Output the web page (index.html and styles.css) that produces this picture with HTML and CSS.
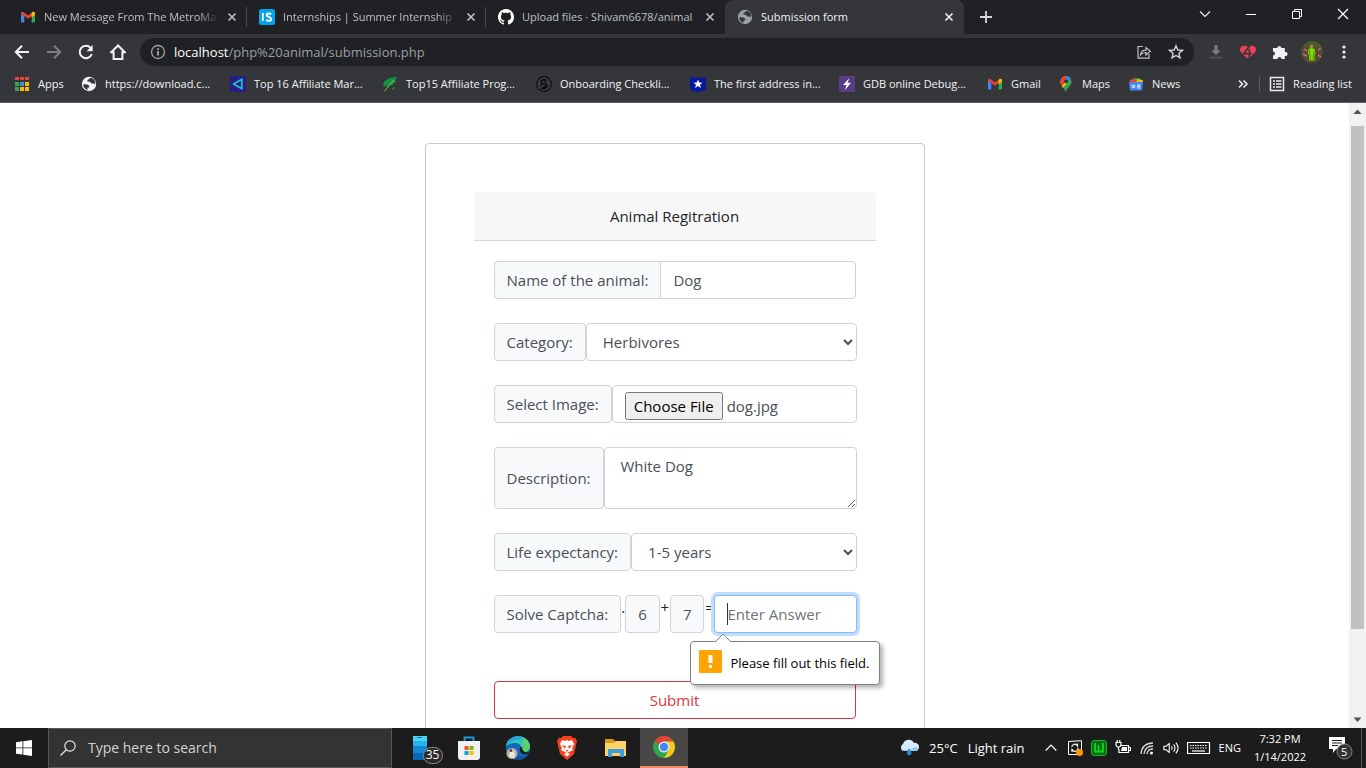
FILE: index.html
```html
<!DOCTYPE html>
<html lang="en">
<head>
<meta charset="utf-8">
<title>Submission form</title>
<link rel="stylesheet" href="styles.css">
</head>
<body>
<svg class="defs" aria-hidden="true">
  <symbol id="x" viewBox="0 0 10 10"><path d="M1.5 1.5l7 7M8.500 1.500l-7 7" fill="none" stroke="currentColor" stroke-width="1.6"/></symbol>
  <symbol id="gmail" viewBox="0 0 14 12"><path d="M0 2v8.500a1 1 0 0 0 1 1h2.300V5z" fill="#4285f4"/><path d="M14 2v8.500a1 1 0 0 1-1 1h-2.300V5z" fill="#34a853"/><path d="M10.700 1.700L14 1v2.400l-3.300 2.600z" fill="#fbbc04"/><path d="M0 2.200Q0 .3 2 .7l5 3.700L12 .7q2-.2 2 1.500l-3.300 2.700L7 7.800 3.300 5 0 2.800z" fill="#ea4335"/><path d="M12 .7q2-.4 2 1.500v1.200l-3.300 2.500V1.700z" fill="#fbbc04"/></symbol>
  <symbol id="globe" viewBox="0 0 16 16"><circle cx="8" cy="8" r="7.200" fill="currentColor"/><path d="M2.200 8.200l4.300.2 1.700 1.300-.1 1.700-1.600.3v2.200C4 13 2 11 2.200 8.200zM8.700 2.300L7.300 3.700l-1 .3.300 1.500 2.200.2 1.700 1.900 2.700-.1.600 1.600c1.500-3-.6-6.200-3.400-7z" fill="#35363a"/></symbol>
</svg>

<header class="browser">
  <div class="tabs">
    <div class="tab">
      <svg class="fav" viewBox="-1 -2 16 16"><use href="#gmail" width="14" height="12"/></svg>
      <span class="tab-title fade">New Message From The MetroMail</span>
      <button class="close" aria-label="Close tab"><svg><use href="#x"/></svg></button>
    </div>
    <div class="tab">
      <svg class="fav" viewBox="0 0 16 16"><rect width="16" height="16" rx="2.500" fill="#00a5ec"/><path d="M3.800 4v8M12.200 5.300C11 4.100 7.600 4 7.600 6c0 2.400 4.600 1.400 4.600 3.900 0 2.500-4 2.100-5 .9" fill="none" stroke="#fff" stroke-width="1.900"/></svg>
      <span class="tab-title fade">Internships | Summer Internship 2022</span>
      <button class="close" aria-label="Close tab"><svg><use href="#x"/></svg></button>
    </div>
    <div class="tab">
      <svg class="fav" viewBox="0 0 16 16"><path fill="#fff" d="M8 0C3.580 0 0 3.580 0 8c0 3.540 2.290 6.530 5.470 7.590.4.070.55-.17.55-.38 0-.19-.01-.82-.01-1.490-2.010.37-2.530-.49-2.690-.94-.09-.23-.48-.94-.82-1.130-.28-.15-.68-.52-.01-.53.63-.01 1.080.58 1.230.82.72 1.210 1.870.87 2.330.66.070-.52.28-.87.51-1.070-1.780-.2-3.640-.89-3.640-3.950 0-.87.31-1.590.82-2.150-.08-.2-.36-1.020.08-2.120 0 0 .67-.21 2.200.82.64-.18 1.320-.27 2-.27s1.360.09 2 .27c1.530-1.040 2.200-.82 2.200-.82.44 1.100.16 1.920.08 2.120.51.56.82 1.270.82 2.150 0 3.070-1.870 3.750-3.650 3.950.29.25.54.73.54 1.480 0 1.070-.01 1.930-.01 2.200 0 .21.15.46.55.38A8.010 8.010 0 0 0 16 8c0-4.420-3.580-8-8-8z"/></svg>
      <span class="tab-title">Upload files · Shivam6678/animal</span>
      <button class="close" aria-label="Close tab"><svg><use href="#x"/></svg></button>
    </div>
    <div class="tab active">
      <svg class="fav gray" viewBox="0 0 16 16"><use href="#globe" width="16" height="16"/></svg>
      <span class="tab-title">Submission form</span>
      <button class="close" aria-label="Close tab"><svg><use href="#x"/></svg></button>
    </div>
    <button class="newtab" aria-label="New tab"><svg viewBox="0 0 12 12"><path d="M6 0v12M0 6h12" stroke="#d5d7da" stroke-width="1.800"/></svg></button>
    <div class="window-buttons">
      <button aria-label="Search tabs"><svg viewBox="0 0 12 12"><path d="M1 3.500l5 5 5-5" fill="none" stroke="#e8eaed" stroke-width="1.200"/></svg></button>
      <button aria-label="Minimize"><svg viewBox="0 0 12 12"><path d="M1 6.500h10" stroke="#fff"/></svg></button>
      <button aria-label="Restore"><svg viewBox="0 0 12 12"><path d="M1.500 3.500h7v7h-7zM3.500 3V1.500h7v7H9" fill="none" stroke="#fff"/></svg></button>
      <button aria-label="Close"><svg viewBox="0 0 12 12"><path d="M1 1l10 10M11 1L1 11" stroke="#fff" stroke-width="1.200"/></svg></button>
    </div>
  </div>

  <div class="toolbar">
    <button class="tool" aria-label="Back"><svg viewBox="0 0 16 16"><path d="M15 8H2M8 1.800L1.800 8 8 14.200" fill="none" stroke="#f1f3f4" stroke-width="2"/></svg></button>
    <button class="tool" aria-label="Forward"><svg viewBox="0 0 16 16"><path d="M1 8h13M8 1.800L14.200 8 8 14.200" fill="none" stroke="#7d7f82" stroke-width="2"/></svg></button>
    <button class="tool" aria-label="Reload"><svg viewBox="0 0 16 16"><path d="M13.800 10A6.200 6.200 0 1 1 12.500 3.700" fill="none" stroke="#f1f3f4" stroke-width="2"/><path d="M14.700 1v6.200H8.500z" fill="#f1f3f4"/></svg></button>
    <button class="tool" aria-label="Home"><svg viewBox="0 0 16 16"><path d="M8 1.500L1.200 8.300H3.600V15h8.800V8.300h2.400z" fill="none" stroke="#f1f3f4" stroke-width="2"/></svg></button>
    <div class="omnibox">
      <svg class="info" viewBox="0 0 16 16"><circle cx="8" cy="8" r="6.500" fill="none" stroke="#9aa0a6" stroke-width="1.300"/><path d="M8 7v4.500M8 4.300V6" stroke="#bdc1c6" stroke-width="1.500"/></svg>
      <span class="url"><b>localhost</b>/php%20animal/submission.php</span>
      <svg class="share" viewBox="0 0 16 16"><path d="M7 2.500H2v11.700h11V10M4.500 11C5 7.500 7 6.200 10 6.200V3.500L14.300 7.200 10 11V8.500c-2.500 0-4 .6-5.500 2.500z" fill="none" stroke="#bdc1c6" stroke-width="1.200"/></svg>
      <svg class="star" viewBox="0 0 16 16"><path d="M8 1.800l1.800 4.200 4.600.4-3.500 3 1.100 4.500L8 11.500l-4 2.400 1.100-4.500-3.500-3 4.600-.4z" fill="none" stroke="#d5d7da" stroke-width="1.400"/></svg>
    </div>
    <button class="tool" aria-label="Downloads"><svg viewBox="0 0 16 16"><path d="M6.500 1h3v5.500h3.200L8 11 3.300 6.500h3.200z" fill="#7c7d80"/><path d="M2 13.500h12" stroke="#54565a" stroke-width="1.500"/></svg></button>
    <button class="tool" aria-label="Extension"><svg viewBox="0 0 16 16"><path d="M8 14.500C3 11 0 8.500 0 5.300 0 1.600 5 .6 8 3c3-2.400 8-1.400 8 2.300 0 3.200-3 5.700-8 9.200z" fill="#ef4056"/><path d="M10 1.500L3.500 9.600H12M9.400 5v9.500" fill="none" stroke="#35363a" stroke-width="1.700"/></svg></button>
    <button class="tool" aria-label="Extensions"><svg viewBox="0 0 16 16"><path d="M1 4h4.300a2 2 0 1 1 4 0h3.500v4a2.100 2.100 0 1 1 0 4v3H9.500a2 2 0 1 0-4 0H1v-3.500a2 2 0 1 0 0-4z" fill="#f1f3f4"/></svg></button>
    <button class="tool" aria-label="Profile"><svg class="avatar" viewBox="0 0 22 22"><circle cx="11" cy="11" r="11" fill="#584835"/><path d="M2 5a11 11 0 0 1 18 0L16 6H6z" fill="#475d24"/><path d="M3 8l3 2M2 13l4 2M17 9l3-2M17 14l3 2" stroke="#a68865" stroke-width="1.500"/><circle cx="10.500" cy="5.500" r="1.700" fill="#bc805a"/><path d="M7.500 8l3-1 3 1 1 5-1 1v5.500h-5.500V14l-1-1z" fill="#83dc00"/><path d="M8.500 9l1 10m3.500-9l-1 9" stroke="#479d0d"/></svg></button>
    <button class="tool dots" aria-label="Menu"><svg viewBox="0 0 16 16"><circle cx="8" cy="3" r="1.600" fill="#f1f3f4"/><circle cx="8" cy="8" r="1.600" fill="#f1f3f4"/><circle cx="8" cy="13" r="1.600" fill="#f1f3f4"/></svg></button>
  </div>

  <nav class="bookmarks">
    <div class="bookmark-items">
      <a href="#"><svg viewBox="0 0 16 16"><path d="M1 1h4v3H1zM6 1h4v3H6zM11 1h4v3h-4z" fill="#e8453c"/><path d="M1 6h4v4H1z" fill="#34a853"/><path d="M6 6h4v4H6z" fill="#4285f4"/><path d="M11 6h4v4h-4zM6 11h4v4H6zM11 11h4v4h-4z" fill="#fbbc04"/><path d="M1 11h4v4H1z" fill="#34a853"/></svg>Apps</a>
      <a href="#"><svg viewBox="0 0 16 16"><use href="#globe" width="16" height="16"/></svg>https://download.c...</a>
      <a href="#"><svg viewBox="0 0 16 16"><path d="M0 0h16v16H0z" fill="#2a1d84"/><path d="M11.800 3.200v9.600L3.500 8z" fill="none" stroke="#12c4cb" stroke-width="1.800" stroke-linejoin="round"/></svg>Top 16 Affiliate Mar...</a>
      <a href="#"><svg viewBox="0 0 16 16"><path d="M15.500 1C8 1 0 4 1.500 11l3-1.300 2.200 1.600 1.200-2.200 2.900-.1V7.200L14 6l-.8-2z" fill="#129447"/><path d="M2 15.500L12 4" stroke="#8ac43f"/><path d="M9.500 12.500l3-2-1 3.500z" fill="#129447"/></svg>Top15 Affiliate Prog...</a>
      <a href="#"><svg viewBox="0 0 16 16"><circle cx="8" cy="8" r="7.300" fill="#3b3c3e" stroke="#101113" stroke-width="1.300"/><path d="M10.500 3.800L6.500 4 5 5.500 6 8l4-.5L11.500 10 9 12.500H6.500L10 9.500M5 8.500l-.5 2M10.500 5H7.800" fill="none" stroke="#0b0c0d" stroke-width="1.500"/></svg>Onboarding Checkli...</a>
      <a href="#"><svg viewBox="0 0 16 16"><path d="M0 1l8 1 8-1v13l-8 2-8-2z" fill="#071a9d"/><path d="M8 3.500l1.200 3 3.300.2-2.500 2 .9 3.200L8 10.100l-2.900 1.800.9-3.200-2.500-2 3.300-.2z" fill="#fff"/></svg>The first address in...</a>
      <a href="#"><svg viewBox="0 0 16 16"><path d="M0 0h16v16H0z" fill="#563d85"/><path d="M10.500 2L4 9h3.500L6 14l6-7.300H8.500z" fill="#fff"/></svg>GDB online Debug...</a>
      <a href="#"><svg viewBox="-1 -2 16 16"><use href="#gmail" width="14" height="12"/></svg>Gmail</a>
      <a href="#"><svg viewBox="0 0 16 16"><path d="M8 16C7.500 12 2.500 10 2.500 5.700A5.500 5.500 0 0 1 8 0z" fill="#fbbc04"/><path d="M8 16c.5-4 5.500-6 5.500-10.300 0-1.300-.5-2.500-1.200-3.500L4 11c2 1.500 3.500 3 4 5z" fill="#34a853"/><path d="M2.500 5.700C2.500 2.700 5 0 8 0L8 5.700 4 10C3 8.700 2.500 7.300 2.500 5.700z" fill="#ea4335"/><path d="M8 0c2 0 3.500.8 4.400 2.200L8 7z" fill="#4285f4"/><circle cx="8" cy="5.500" r="2" fill="#35363a"/><path d="M4 10l3-3.300 1.700.8L5 11.700z" fill="#fbbc04"/></svg>Maps</a>
      <a href="#"><svg viewBox="0 0 16 16"><path d="M5 2h7v4H5z" fill="#0f9d58"/><path d="M1.500 4l6-1.500L9 8 3 9z" fill="#ea4335"/><path d="M9 3l6 1-1 5-6-1z" fill="#fbbc04"/><path d="M1 6h14l-1 8.500H2z" fill="#4285f4"/><path d="M7.200 9.300H6c-1.500-.8-2.300 0-2.300 1s.7 1.700 2 1.400l1-.4v-.8H5.500M9 9h3.500M9 10.500h3M9 12h3.500" fill="none" stroke="#fff" stroke-width=".9"/></svg>News</a>
    </div>
    <span class="more"><svg viewBox="0 0 16 16"><path d="M4 4.500L7.500 8 4 11.500M8.500 4.500L12 8l-3.500 3.500" fill="none" stroke="#e8eaed" stroke-width="1.600"/></svg></span>
    <a class="reading" href="#"><svg viewBox="0 0 16 16"><path d="M1.500 1.500h13v13h-13z" fill="none" stroke="#e8eaed" stroke-width="1.500"/><path d="M4 5h2M7 5h5.500M4 8h2M7 8h5.500M4 11h2M7 11h5.500" stroke="#e8eaed" stroke-width="1.500"/></svg>Reading list</a>
  </nav>
</header>

<div class="viewport">
  <main class="page">
    <section class="panel">
      <h1 class="panel-head">Animal Regitration</h1>
      <form class="form">
        <div class="group joined">
          <label class="addon" for="name">Name of the animal:</label>
          <input class="control" id="name" type="text" value="Dog">
        </div>
        <div class="group">
          <label class="addon" for="category">Category:</label>
          <select class="control" id="category"><option>Herbivores</option></select>
        </div>
        <div class="group">
          <label class="addon" for="image">Select Image:</label>
          <input class="control" id="image" type="file">
        </div>
        <div class="group">
          <label class="addon" for="description">Description:</label>
          <textarea class="control" id="description" rows="2"> White Dog</textarea>
        </div>
        <div class="group">
          <label class="addon" for="life">Life expectancy:</label>
          <select class="control" id="life"><option>1-5 years</option></select>
        </div>
        <div class="group captcha">
          <label class="addon" for="answer">Solve Captcha:</label>
          <span class="op dot">.</span>
          <span class="addon">6</span>
          <span class="op">+</span>
          <span class="addon">7</span>
          <span class="op">=</span>
          <div class="answer">
            <input class="control focused" id="answer" type="text" placeholder="Enter Answer">
            <div class="bubble" role="alert">
              <svg class="bubble-tip" viewBox="0 0 18 10"><path d="M0 10L9 1l9 9z" fill="#fff"/><path d="M1 9l8-8 8 8" fill="none" stroke="#808080"/></svg>
              <svg class="warn" viewBox="0 0 23 23"><rect width="23" height="23" rx="1" fill="#ffa300"/><path d="M9.500 5h4v8h-4zM10 15h3v3h-3z" fill="#fff"/></svg>
              Please fill out this field.
            </div>
          </div>
        </div>
        <button class="submit" type="button">Submit</button>
      </form>
    </section>
  </main>
  <div class="scrollbar">
    <svg viewBox="0 0 17 17"><path d="M4.500 11L8.500 6.500l4 4.500z" fill="#505050"/></svg>
    <div class="track"><div class="thumb"></div></div>
    <svg viewBox="0 0 17 17"><path d="M4.500 6.500L8.500 11l4-4.500z" fill="#505050"/></svg>
  </div>
</div>

<footer class="taskbar">
  <button class="start" aria-label="Start"><svg viewBox="0 0 16 16"><path d="M0 2.200l6.500-.9v6.200H0zM7.300 1.200L16 0v7.500H7.300zM0 8.300h6.500v6.300L0 13.700zM7.300 8.300H16V16l-8.700-1.300z" fill="#fff"/></svg></button>
  <label class="search">
    <svg viewBox="0 0 16 16"><circle cx="10" cy="6" r="5.200" fill="none" stroke="#e6e6e6" stroke-width="1.200"/><path d="M6.300 9.700L.5 15.500" stroke="#e6e6e6" stroke-width="1.300"/></svg>
    <input type="text" placeholder="Type here to search" aria-label="Search">
  </label>
  <div class="apps">
    <button aria-label="Your Phone"><svg class="phone" viewBox="0 0 32 30"><path d="M2 1h14v24H2z" fill="#1387d2"/><path d="M2 1h14v10H2z" fill="#27b4ee"/><path d="M2 1h14v5H2z" fill="#50d4f8"/><path d="M2 18h14v7H2z" fill="#0b67b4"/><path d="M6 2.500h5" stroke="#156b9f"/><rect x="12.500" y="12.500" width="19" height="16" rx="8" fill="#292929" stroke="#8b8b8b"/></svg><span class="count">35</span></button>
    <button aria-label="Store"><svg viewBox="0 0 24 24"><path d="M7.500 6V1.500h9V6" fill="none" stroke="#1599dc" stroke-width="2"/><path d="M1 5h22v16q0 3-3 3H4q-3 0-3-3z" fill="#f1f1f1"/><path d="M7.500 10h4v4h-4z" fill="#f25022"/><path d="M12.500 10h4v4h-4z" fill="#7fba00"/><path d="M7.500 15h4v4h-4z" fill="#00a4ef"/><path d="M12.500 15h4v4h-4z" fill="#ffb900"/></svg></button>
    <button aria-label="Edge"><svg viewBox="0 0 24 24"><circle cx="12" cy="12" r="12" fill="#1269bd"/><path d="M.2 10C1-1 17-3 22 5c4 6 1 11-4 11-4 0-5-1-3-3 2-5-7-9-14.800-3z" fill="#35c6b6"/><path d="M.2 10C1-1 17-3 22 5c-6-3-15-3-21.800 5z" fill="#22a4df"/><path d="M15 1c7 1 11 8 8 13-3 3-8 2-8 0 4-4 3-9 0-13z" fill="#5ad266"/><path d="M9 10c-3 7 3 13 12 10-5 5-13 5-17 1z" fill="#104f91"/><path d="M14 15c-1-4 1-4 2-4 0 4 3 6 7 5l-1 2c-4 1-7 0-8-3z" fill="#1c1c1c"/><circle cx="6" cy="17.500" r="5.500" fill="#bbb0a2"/><path d="M4 14l3-1 2 5-1 4-5-1z" fill="#eee9df"/><circle cx="5" cy="14.500" r="1.500" fill="#594330"/></svg></button>
    <button aria-label="Brave"><svg viewBox="0 0 24 24"><path d="M6 2l2-2h8l2 2 2-.3L22 5l-1 4-2 9-7 6-7-6-2-9-1-4 2-3.300z" fill="#f6411f"/><path d="M12 4l2 1 3-1 2 4-2 4 1 2-4 2-2 1-2-1-4-2 1-2-2-4 2-4 3 1zM9 18l3-1.500L15 18l-3 2.500z" fill="#fff"/><path d="M7 9l4 1-1 3zm10 0l-4 1 1 3zM10.500 14h3L12 16z" fill="#f6411f"/></svg></button>
    <button aria-label="File Explorer"><svg viewBox="0 0 24 24"><path d="M1 3h8l2 2h11v4H1z" fill="#d59b17"/><path d="M1 7h9l2-2h10v15H1z" fill="#fbd568"/><path d="M4 21v-8h16v8h-4v-4H8v4z" fill="#3b9ddd"/></svg></button>
    <button class="current" aria-label="Chrome"><svg viewBox="0 0 24 24"><circle cx="12" cy="12" r="11" fill="#2fa350"/><path d="M12 12L2.500 6.500A11 11 0 0 1 21.500 6.500H12z" fill="#e44335"/><path d="M21.500 6.500A11 11 0 0 1 12 23l5-8.300L12 6.500z" fill="#fbc719"/><circle cx="12" cy="12" r="5.500" fill="#eee"/><circle cx="12" cy="12" r="4.200" fill="#4285f4"/></svg></button>
  </div>
  <div class="tray">
    <div class="weather"><svg viewBox="0 0 20 16"><path d="M4 11a4 4 0 0 1 0-7 6 6 0 0 1 11-1 4 4 0 0 1 2 8z" fill="#d8ebfa"/><path d="M3 9c4 2 9 1 13-2l3 1c0 2-1 3-2 3H4z" fill="#91c9f3"/><path d="M10 8c1 2 2.500 3.500 2.500 5a2.300 2.300 0 0 1-4.600 0C8 11.500 9 10 10 8z" fill="#258edc"/></svg><span>25°C</span><span>Light rain</span></div>
    <svg class="chev" viewBox="0 0 12 12"><path d="M.7 8.500L6 3.200l5.300 5.300" fill="none" stroke="#fff" stroke-width="1.200"/></svg>
    <svg viewBox="0 0 16 16"><path d="M10 14.500H1.500v-13L14.500.7V10" fill="none" stroke="#fff"/><path d="M4.800 7a3 3 0 0 1 5-2l.7 1V3.500M11 8a3 3 0 0 1-5 2.500L5 9.500V12" fill="none" stroke="#fff" stroke-width="1.200"/><circle cx="12.500" cy="12.500" r="3.500" fill="#ff9800"/></svg>
    <svg viewBox="0 0 16 16"><path d="M2 .5h12L15.500 2v12L14 15.500H2L.5 14V2z" fill="#006d16" stroke="#20b326"/><path d="M4 3v8.500h3.500V5M7.500 11.500H12V3" fill="none" stroke="#10d51d" stroke-width="1.800"/></svg>
    <svg viewBox="0 0 16 16"><path d="M5.500 5.500h8v7H4V9.500M14 7.500h1.500v3H14M1 2.500h5v2Q6 7 3.500 7T1 4.500zM2.200 0v2M4.800 0v2M3.500 7v3" fill="none" stroke="#fff" stroke-width="1.200"/><path d="M7 7h5v4H6z" fill="#fff"/></svg>
    <svg viewBox="0 0 16 16"><path d="M2 14Q3 3 14 3M5 14q1-8 9-8M8 14q.5-5 6-5" fill="none" stroke="#d8d8d8" stroke-width="1.300"/><circle cx="12.500" cy="13" r="1.500" fill="#fff"/></svg>
    <svg viewBox="0 0 18 16"><path d="M1 6v4h2.500L7 13V3L3.500 6zM9.500 6q1.500 2 0 4M12 4q3 4 0 8M14.500 2q5 6 0 12" fill="none" stroke="#fff" stroke-width="1.200"/></svg>
    <svg class="keyboard" viewBox="0 0 24 16"><path d="M.5 2.500h22v11H.5z" fill="none" stroke="#fff" stroke-width="1.200"/><path d="M3 5.500h17M3 8h17" stroke="#fff" stroke-dasharray="1.500 1"/><path d="M5 11h13" stroke="#fff" stroke-width="1.200"/></svg>
    <span class="lang">ENG</span>
    <div class="clock"><span>7:32 PM</span><span>1/14/2022</span></div>
    <div class="notice"><svg viewBox="0 0 24 24"><path d="M0 1h16v12H7l-3 4v-4H0z" fill="#fff"/><path d="M3 4.500h10M3 7h10M3 9.500h6" stroke="#222"/><circle cx="15.500" cy="15.500" r="7.500" fill="#333" stroke="#888"/></svg><span>5</span></div>
  </div>
</footer>
<script src="script.js"></script>
</body>
</html>
```
FILE: styles.css
```css
* { box-sizing: border-box; }
body {
  margin: 0;
  height: 100vh;
  display: flex;
  flex-direction: column;
  overflow: hidden;
  font-family: "Open Sans", "Noto Sans", sans-serif;
  font-size: 15px;
  line-height: 24px;
  color: #212529;
  background: #fff;
}
button, input, select, textarea { font: inherit; margin: 0; }
button { border: 0; padding: 0; background: none; }
a { color: inherit; text-decoration: none; }
svg { display: block; flex: none; }
.defs { width: 0; height: 0; position: absolute; }

/* Browser frame */
.browser {
  flex: none;
  background: #35363a;
  color: #e8eaed;
  font-size: 11px;
  line-height: 16px;
  border-bottom: 1px solid #5f6064;
}
.tabs { display: flex; height: 34px; padding-left: 8px; background: #202124; }
.tab {
  width: 239px;
  min-width: 0;
  display: flex;
  align-items: center;
  padding: 0 10px 0 12px;
  color: #bdc1c6;
  background: linear-gradient(#4a4c50, #4a4c50) right center / 1px 20px no-repeat;
}
.tab:nth-child(3) { background: none; }
.tab.active { background: #35363a; border-radius: 8px 8px 0 0; color: #f1f3f4; }
.fav { width: 16px; height: 16px; margin-right: 8px; }
.gray { color: #9aa0a6; }
.tab-title { flex: 1; min-width: 0; overflow: hidden; white-space: nowrap; margin-right: 8px; }
.fade { -webkit-mask-image: linear-gradient(90deg, #000 88%, transparent); mask-image: linear-gradient(90deg, #000 88%, transparent); }
.close { color: inherit; }
.close svg { width: 10px; height: 10px; }
.newtab { padding: 0 16px; }
.newtab svg { width: 12px; height: 12px; }
.window-buttons { display: flex; margin-left: auto; height: 28px; }
.window-buttons button { width: 46px; display: flex; align-items: center; justify-content: center; }
.window-buttons svg { width: 12px; height: 12px; }

.toolbar { display: flex; align-items: center; height: 36px; padding: 0 6px; }
.tool { width: 32px; height: 28px; display: flex; align-items: center; justify-content: center; }
.tool svg { width: 16px; height: 16px; }
.tool .avatar { width: 22px; height: 22px; }
.omnibox {
  flex: 1;
  height: 28px;
  display: flex;
  align-items: center;
  margin: 0 6px;
  padding: 0 10px;
  border-radius: 14px;
  background: #202124;
}
.omnibox svg { width: 16px; height: 16px; }
.url { flex: 1; margin-left: 8px; font-size: 13px; color: #9aa0a6; }
.url b { font-weight: 400; color: #fff; }
.star { margin-left: 16px; }

.bookmarks { display: flex; align-items: center; height: 32px; padding: 0 14px 4px; color: #f1f3f4; }
.bookmark-items { flex: 1; display: grid; grid-template-columns: 67px 149px 152px 154px 154px 149px 148px 71px 70px 1fr; }
.bookmarks a { display: flex; align-items: center; gap: 8px; white-space: nowrap; }
.bookmarks svg { width: 16px; height: 16px; }
.more { padding-right: 8px; }
.bookmarks .reading { border-left: 1px solid #5f6064; padding-left: 9px; }

/* Page */
.viewport { flex: 1; min-height: 0; display: flex; overflow: hidden; }
.page { flex: 1; min-width: 0; padding-top: 40px; }
.panel {
  width: 500px;
  max-width: 100%;
  margin: 0 auto;
  padding: 48px;
  border: 1px solid #c9c9c9;
  border-radius: 4px;
}
.panel-head {
  margin: 0;
  padding: 12px 20px;
  font-size: 15px;
  font-weight: 400;
  line-height: 24px;
  text-align: center;
  background: #f7f7f7;
  border-bottom: 1px solid #d8d8d8;
  border-radius: 3px 3px 0 0;
}
.form { padding: 20px; display: flex; flex-direction: column; gap: 24px; }
.group { display: flex; align-items: stretch; }
.group:not(.joined) { margin-right: -1px; }
.addon {
  flex: none;
  display: flex;
  align-items: center;
  padding: 6px 12px;
  color: #495057;
  background: #f8f9fa;
  border: 1px solid #ced4da;
  border-radius: 4px;
}
.control {
  flex: 1;
  min-width: 0;
  width: 100%;
  height: 38px;
  padding: 6px 12px;
  color: #495057;
  background: #fff;
  border: 1px solid #ced4da;
  border-radius: 4px;
  outline: 0;
}
textarea.control { height: 62px; resize: vertical; }
.control::file-selector-button { font: inherit; padding: 2px 7px; }
.joined .addon { border-right: 0; border-radius: 4px 0 0 4px; }
.joined .control { border-radius: 0 4px 4px 0; }
.op { width: 10px; text-align: center; }
.dot { width: 4px; }
.answer { flex: 1; min-width: 0; position: relative; }
.focused {
  border-color: #80bdff;
  box-shadow: 0 0 0 3px #bfdeff;
  background: linear-gradient(#333, #333) 12px center / 1px 22px no-repeat #fff;
}
.control::placeholder { color: #6c757d; opacity: 1; }
.bubble {
  position: absolute;
  top: 46px;
  left: -24px;
  display: flex;
  align-items: center;
  gap: 8px;
  height: 44px;
  padding: 0 10px 0 8px;
  font-size: 13px;
  color: #000;
  white-space: nowrap;
  background: #fff;
  border: 1px solid #808080;
  border-radius: 4px;
  box-shadow: 3px 3px 4px rgba(0, 0, 0, .3);
}
.bubble-tip { position: absolute; top: -9px; left: 23px; width: 18px; height: 10px; }
.warn { width: 23px; height: 23px; margin-bottom: 3px; }
.submit {
  height: 38px;
  margin-top: 24px;
  color: #dc3545;
  border: 1px solid #dc3545;
  border-radius: 4px;
}
.scrollbar { width: 17px; display: flex; flex-direction: column; background: #f1f1f1; }
.scrollbar svg { width: 17px; height: 17px; }
.track { flex: 1; padding: 6px 2px 0; }
.thumb { height: 86%; background: #c1c1c1; }

/* Taskbar */
.taskbar { flex: none; display: flex; height: 40px; color: #fff; background: #1c1c1d; line-height: 18px; }
.start { width: 48px; display: flex; align-items: center; justify-content: center; }
.start svg { width: 16px; height: 16px; }
.search {
  width: 344px;
  display: flex;
  align-items: center;
  gap: 12px;
  padding: 0 11px;
  background: #333;
  border: 1px solid #585858;
}
.search svg { width: 16px; height: 16px; }
.search input { flex: 1; min-width: 0; padding: 0; border: 0; outline: 0; background: none; color: #fff; font-size: 14px; }
.search input::placeholder { color: #d2d2d2; opacity: 1; }
.apps { display: flex; margin-left: 3px; }
.apps button { position: relative; width: 49px; display: flex; align-items: center; justify-content: center; }
.apps svg { width: 24px; height: 24px; }
.apps .phone { width: 32px; height: 30px; margin: 4px 0 0 14px; }
.count { position: absolute; left: 28px; top: 18px; width: 19px; text-align: center; font-size: 12px; color: #fff; }
.apps .current { width: 48px; background: #484746; border-bottom: 2px solid #f08864; }
.tray { margin-left: auto; display: flex; align-items: center; gap: 8px; padding-right: 4px; }
.tray svg { width: 16px; height: 16px; }
.weather { display: flex; align-items: center; gap: 10px; margin-right: 12px; font-size: 13px; }
.tray .weather svg { width: 20px; height: 18px; }
.tray .chev { width: 12px; height: 12px; margin-right: 2px; }
.tray .keyboard { width: 24px; }
.lang { font-size: 11px; }
.clock { width: 62px; display: flex; flex-direction: column; align-items: center; font-size: 11px; }
.notice { position: relative; width: 43px; padding-left: 10px; border-right: 1px solid #555; height: 40px; display: flex; align-items: center; }
.tray .notice svg { width: 24px; height: 24px; }
.notice span { position: absolute; left: 22px; top: 15px; font-size: 11px; }
```
FILE: script.js
```js
// Preselect the picture attached to this entry.
const files = new DataTransfer();
files.items.add(new File([""], "dog.jpg", { type: "image/jpeg" }));
document.getElementById("image").files = files.files;
```
